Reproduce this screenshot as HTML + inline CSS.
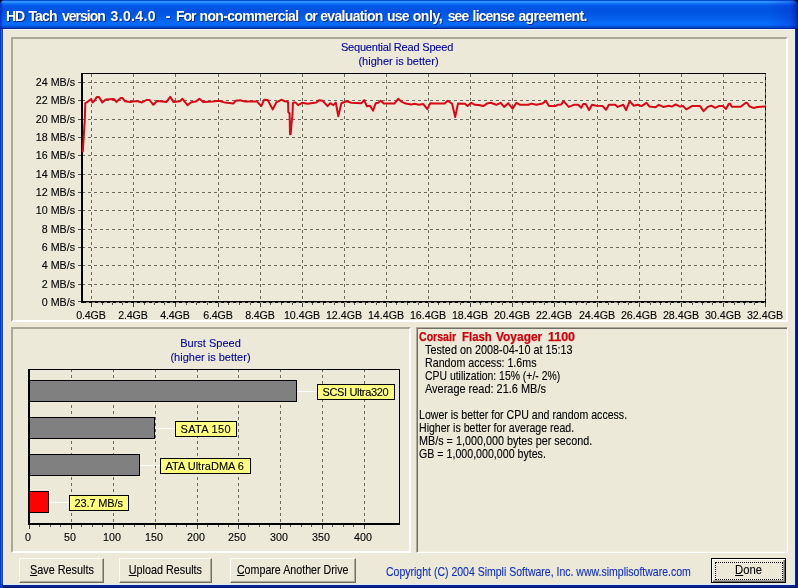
<!DOCTYPE html>
<html>
<head>
<meta charset="utf-8">
<title>HD Tach</title>
<style>
html,body{margin:0;padding:0;}
body{width:798px;height:588px;overflow:hidden;background:#ece9d8;position:relative;font-family:"Liberation Sans",sans-serif;font-size:11px;color:#000;}
.abs{position:absolute;}
#titlebar{left:0;top:0;width:798px;height:29px;background:linear-gradient(to bottom,#0050d2 0px,#0050d2 1px,#2c8cff 1px,#3296ff 2px,#1f82fc 3px,#0a68f0 4px,#0058e8 6px,#0054e1 9px,#0054e1 12px,#025ae6 15px,#0460ec 19px,#066af6 22px,#066cfa 25px,#0460ec 26px,#0248c8 27px,#0248c8 28px,#08289a 28px,#08289a 29px);}
#titletext{left:0;top:8px;width:798px;height:16px;color:#fff;font-weight:bold;font-size:14px;line-height:16px;will-change:transform;white-space:pre;text-shadow:1px 1px 0 #0a2a8a;}
#titletext span{position:absolute;top:0;white-space:pre;}
#bl{left:0;top:29px;width:4px;height:559px;background:linear-gradient(to right,#0032d2 0px,#0032d2 1px,#2d64e6 1px,#2d64e6 2px,#19469f 2px,#19469f 3px,#dcf0ff 3px,#dcf0ff 4px);}
#br{left:794px;top:29px;width:4px;height:559px;background:linear-gradient(to right,#e1f0ff 0px,#e1f0ff 1px,#052a8e 1px,#052a8e 2px,#001e84 2px,#001e84 3px,#001a82 3px,#001a82 4px);}
#bb{left:0;top:584px;width:798px;height:4px;background:linear-gradient(to bottom,#dcebff 0px,#dcebff 1px,#0a2896 1px,#0a2896 2px,#001e88 2px,#001e88 3px,#001a82 3px,#001a82 4px);}
#tw{left:3px;top:29px;width:792px;height:1px;background:#eef5ff;}
#cl{left:0;top:584px;width:3px;height:4px;background:linear-gradient(to right,#0032d2 0px,#0032d2 1px,#1a46c0 1px,#1a46c0 2px,#102e96 2px);}
#cr{left:795px;top:584px;width:3px;height:4px;background:#001a82;}
.groove{box-sizing:border-box;border:2px solid;border-color:#aca899 #fff #fff #aca899;}
.sunken{box-sizing:border-box;border:1px solid;border-color:#aca899 #fff #fff #aca899;box-shadow:inset 1px 1px 0 #716f64, inset -1px -1px 0 #f1efe2;}
.btn{display:flex;justify-content:center;box-sizing:border-box;height:25px;border:1px solid;border-color:#fdfcf6 #716f64 #716f64 #fdfcf6;box-shadow:inset -1px -1px 0 #aca899;text-align:center;line-height:23px;font-size:11px;}
.lbl{box-sizing:border-box;background:#ffff80;border:1px solid #000;height:16px;}
.lblt{-webkit-text-stroke:0.12px currentColor;height:14px;line-height:14px;font-size:11px;white-space:pre;}
.t{white-space:pre;line-height:13px;-webkit-text-stroke:0.12px currentColor;}
u{text-decoration:underline;}
.yl{left:19px;width:56px;text-align:right;font-size:10.7px;}
.xl{top:309px;width:60px;text-align:center;font-size:10.7px;letter-spacing:-0.2px;}
.bl{top:531px;width:60px;text-align:center;font-size:10.7px;}
.sx{font-size:12.2px;transform-origin:0 0;}
.bt{-webkit-text-stroke:0.12px currentColor;display:block;flex:none;white-space:nowrap;font-size:12.2px;letter-spacing:0;}
</style>
</head>
<body><div id="wrap" style="position:absolute;left:0;top:0;width:798px;height:588px;opacity:0.999;">
<div id="titlebar" class="abs"></div>
<div class="abs" style="left:768px;top:0;width:30px;height:29px;background:linear-gradient(to right,rgba(10,30,200,0) 0px,rgba(10,30,200,0.28) 22px,rgba(8,30,170,0.6) 27px,rgba(6,24,140,0.85) 30px);"></div>
<div class="abs" style="left:0;top:0;width:3px;height:29px;background:linear-gradient(to right,rgba(6,30,180,0.7) 0px,rgba(6,30,180,0.45) 1.5px,rgba(6,30,180,0) 3px);"></div>
<svg class="abs" style="left:0;top:0;" width="798" height="5" viewBox="0 0 798 5"><path d="M0 0H3Q0.8 0.8 0 3.2Z" fill="#06081a"/><path d="M798 0H794Q797 0.8 798 4Z" fill="#06081a"/></svg>
<div id="titletext" class="abs"><span style="left:6.0px;letter-spacing:-1.00px">HD</span><span style="left:28.5px;letter-spacing:-0.90px">Tach</span><span style="left:62.0px;letter-spacing:-1.00px">version</span><span style="left:110.5px;letter-spacing:0.35px">3.0.4.0</span><span style="left:165.7px;letter-spacing:-0.55px">-</span><span style="left:175.9px;letter-spacing:-1.00px">For</span><span style="left:199.6px;letter-spacing:-0.67px">non-commercial</span><span style="left:304.7px;letter-spacing:-1.05px">or</span><span style="left:320.2px;letter-spacing:-0.67px">evaluation</span><span style="left:387.1px;letter-spacing:-0.90px">use</span><span style="left:412.7px;letter-spacing:-0.40px">only,</span><span style="left:447.7px;letter-spacing:-0.85px">see</span><span style="left:472.6px;letter-spacing:-0.85px">license</span><span style="left:518.4px;letter-spacing:-0.63px">agreement.</span></div>
<div id="bl" class="abs"></div>
<div id="br" class="abs"></div>
<div id="bb" class="abs"></div>
<div id="tw" class="abs"></div>
<div id="cl" class="abs"></div>
<div id="cr" class="abs"></div>

<!-- frames -->
<div class="abs groove" style="left:11px;top:37px;width:777px;height:285px;"></div>
<div class="abs groove" style="left:11px;top:327px;width:400px;height:226px;"></div>
<div class="abs sunken" style="left:416px;top:327px;width:372px;height:226px;"></div>

<svg class="abs" style="left:0;top:0;" width="798" height="588" viewBox="0 0 798 588">
<g stroke="#6c6a5c" stroke-width="1" stroke-dasharray="3 3" shape-rendering="crispEdges" fill="none">
<line x1="82" y1="82.5" x2="766" y2="82.5"/>
<line x1="82" y1="100.5" x2="766" y2="100.5"/>
<line x1="82" y1="119.5" x2="766" y2="119.5"/>
<line x1="82" y1="137.5" x2="766" y2="137.5"/>
<line x1="82" y1="155.5" x2="766" y2="155.5"/>
<line x1="82" y1="174.5" x2="766" y2="174.5"/>
<line x1="82" y1="192.5" x2="766" y2="192.5"/>
<line x1="82" y1="210.5" x2="766" y2="210.5"/>
<line x1="82" y1="229.5" x2="766" y2="229.5"/>
<line x1="82" y1="247.5" x2="766" y2="247.5"/>
<line x1="82" y1="265.5" x2="766" y2="265.5"/>
<line x1="82" y1="284.5" x2="766" y2="284.5"/>
<line x1="91.5" y1="74" x2="91.5" y2="301"/>
<line x1="133.5" y1="74" x2="133.5" y2="301"/>
<line x1="175.5" y1="74" x2="175.5" y2="301"/>
<line x1="218.5" y1="74" x2="218.5" y2="301"/>
<line x1="260.5" y1="74" x2="260.5" y2="301"/>
<line x1="302.5" y1="74" x2="302.5" y2="301"/>
<line x1="344.5" y1="74" x2="344.5" y2="301"/>
<line x1="386.5" y1="74" x2="386.5" y2="301"/>
<line x1="428.5" y1="74" x2="428.5" y2="301"/>
<line x1="470.5" y1="74" x2="470.5" y2="301"/>
<line x1="512.5" y1="74" x2="512.5" y2="301"/>
<line x1="554.5" y1="74" x2="554.5" y2="301"/>
<line x1="597.5" y1="74" x2="597.5" y2="301"/>
<line x1="639.5" y1="74" x2="639.5" y2="301"/>
<line x1="681.5" y1="74" x2="681.5" y2="301"/>
<line x1="723.5" y1="74" x2="723.5" y2="301"/>
</g>
<g shape-rendering="crispEdges">
<rect x="81" y="73" width="685" height="1" fill="#000"/>
<rect x="765" y="73" width="1" height="230" fill="#000"/>
<line x1="765.5" y1="74" x2="765.5" y2="300" stroke="#6c6a5c" stroke-dasharray="3 3"/>
<rect x="81" y="73" width="2" height="230" fill="#000"/>
<rect x="81" y="301" width="685" height="2" fill="#000"/>
<line x1="86" y1="302.5" x2="765" y2="302.5" stroke="#8a8778" stroke-dasharray="3 3"/>
<rect x="78" y="82" width="3" height="1" fill="#555"/>
<rect x="78" y="100" width="3" height="1" fill="#555"/>
<rect x="78" y="119" width="3" height="1" fill="#555"/>
<rect x="78" y="137" width="3" height="1" fill="#555"/>
<rect x="78" y="155" width="3" height="1" fill="#555"/>
<rect x="78" y="174" width="3" height="1" fill="#555"/>
<rect x="78" y="192" width="3" height="1" fill="#555"/>
<rect x="78" y="210" width="3" height="1" fill="#555"/>
<rect x="78" y="229" width="3" height="1" fill="#555"/>
<rect x="78" y="247" width="3" height="1" fill="#555"/>
<rect x="78" y="265" width="3" height="1" fill="#555"/>
<rect x="78" y="284" width="3" height="1" fill="#555"/>
<rect x="78" y="301" width="3" height="1" fill="#555"/>
<rect x="91" y="303" width="1" height="4" fill="#444"/>
<rect x="102" y="303" width="1" height="2" fill="#555"/>
<rect x="112" y="303" width="1" height="2" fill="#555"/>
<rect x="122" y="303" width="1" height="2" fill="#555"/>
<rect x="133" y="303" width="1" height="4" fill="#444"/>
<rect x="144" y="303" width="1" height="2" fill="#555"/>
<rect x="154" y="303" width="1" height="2" fill="#555"/>
<rect x="164" y="303" width="1" height="2" fill="#555"/>
<rect x="175" y="303" width="1" height="4" fill="#444"/>
<rect x="186" y="303" width="1" height="2" fill="#555"/>
<rect x="196" y="303" width="1" height="2" fill="#555"/>
<rect x="207" y="303" width="1" height="2" fill="#555"/>
<rect x="218" y="303" width="1" height="4" fill="#444"/>
<rect x="228" y="303" width="1" height="2" fill="#555"/>
<rect x="239" y="303" width="1" height="2" fill="#555"/>
<rect x="250" y="303" width="1" height="2" fill="#555"/>
<rect x="260" y="303" width="1" height="4" fill="#444"/>
<rect x="270" y="303" width="1" height="2" fill="#555"/>
<rect x="281" y="303" width="1" height="2" fill="#555"/>
<rect x="292" y="303" width="1" height="2" fill="#555"/>
<rect x="302" y="303" width="1" height="4" fill="#444"/>
<rect x="312" y="303" width="1" height="2" fill="#555"/>
<rect x="323" y="303" width="1" height="2" fill="#555"/>
<rect x="334" y="303" width="1" height="2" fill="#555"/>
<rect x="344" y="303" width="1" height="4" fill="#444"/>
<rect x="354" y="303" width="1" height="2" fill="#555"/>
<rect x="365" y="303" width="1" height="2" fill="#555"/>
<rect x="376" y="303" width="1" height="2" fill="#555"/>
<rect x="386" y="303" width="1" height="4" fill="#444"/>
<rect x="396" y="303" width="1" height="2" fill="#555"/>
<rect x="407" y="303" width="1" height="2" fill="#555"/>
<rect x="418" y="303" width="1" height="2" fill="#555"/>
<rect x="428" y="303" width="1" height="4" fill="#444"/>
<rect x="438" y="303" width="1" height="2" fill="#555"/>
<rect x="449" y="303" width="1" height="2" fill="#555"/>
<rect x="460" y="303" width="1" height="2" fill="#555"/>
<rect x="470" y="303" width="1" height="4" fill="#444"/>
<rect x="480" y="303" width="1" height="2" fill="#555"/>
<rect x="491" y="303" width="1" height="2" fill="#555"/>
<rect x="502" y="303" width="1" height="2" fill="#555"/>
<rect x="512" y="303" width="1" height="4" fill="#444"/>
<rect x="522" y="303" width="1" height="2" fill="#555"/>
<rect x="533" y="303" width="1" height="2" fill="#555"/>
<rect x="544" y="303" width="1" height="2" fill="#555"/>
<rect x="554" y="303" width="1" height="4" fill="#444"/>
<rect x="565" y="303" width="1" height="2" fill="#555"/>
<rect x="576" y="303" width="1" height="2" fill="#555"/>
<rect x="586" y="303" width="1" height="2" fill="#555"/>
<rect x="597" y="303" width="1" height="4" fill="#444"/>
<rect x="608" y="303" width="1" height="2" fill="#555"/>
<rect x="618" y="303" width="1" height="2" fill="#555"/>
<rect x="628" y="303" width="1" height="2" fill="#555"/>
<rect x="639" y="303" width="1" height="4" fill="#444"/>
<rect x="650" y="303" width="1" height="2" fill="#555"/>
<rect x="660" y="303" width="1" height="2" fill="#555"/>
<rect x="670" y="303" width="1" height="2" fill="#555"/>
<rect x="681" y="303" width="1" height="4" fill="#444"/>
<rect x="692" y="303" width="1" height="2" fill="#555"/>
<rect x="702" y="303" width="1" height="2" fill="#555"/>
<rect x="712" y="303" width="1" height="2" fill="#555"/>
<rect x="723" y="303" width="1" height="4" fill="#444"/>
<rect x="734" y="303" width="1" height="2" fill="#555"/>
<rect x="744" y="303" width="1" height="2" fill="#555"/>
<rect x="754" y="303" width="1" height="2" fill="#555"/>
<rect x="765" y="303" width="1" height="4" fill="#444"/>
</g>
<polyline points="82.8,151.4 83.8,135.1 84.8,119.4 85.3,103.2 87.5,101.9 91.3,99.0 92.5,102.5 94.4,100.7 96.9,96.9 99.0,96.9 102.3,102.5 105.7,99.4 113.8,99.0 116.3,101.9 120.7,98.1 122.6,98.1 125.1,101.3 130.1,101.9 135.1,101.3 137.6,101.3 142.0,102.5 146.4,100.0 149.5,100.0 153.3,104.8 157.1,101.0 160.2,101.3 166.5,101.9 170.2,96.9 173.4,101.9 180.0,101.3 182.5,98.8 187.5,105.1 191.3,102.3 195.7,101.6 199.4,98.8 203.2,101.9 212.6,101.6 218.9,100.7 225.1,102.6 233.3,103.6 235.8,100.7 240.2,100.3 245.2,101.6 257.1,101.6 261.2,106.1 264.2,99.8 267.7,100.1 272.8,109.4 276.3,102.3 281.3,99.8 285.7,101.6 287.4,101.6 288.1,102.6 288.3,112.0 289.6,113.5 290.0,134.3 290.7,134.0 291.5,124.0 292.5,114.5 292.9,103.2 293.8,102.6 295.7,102.6 298.2,105.1 302.0,102.8 307.6,103.8 316.4,102.6 318.9,100.3 322.6,100.7 327.6,106.1 330.2,103.2 333.3,105.1 335.8,102.6 338.3,116.3 341.4,103.2 346.4,101.3 351.5,102.8 361.5,103.2 364.2,100.1 366.9,106.3 370.0,105.7 373.1,110.7 375.7,103.2 378.2,102.8 380.7,100.7 383.8,103.6 394.4,103.6 398.2,98.8 401.3,101.6 405.7,103.6 411.4,104.4 414.5,103.8 418.9,104.8 423.3,104.1 427.3,109.1 430.2,103.2 433.3,103.6 444.6,103.6 447.7,100.7 452.1,103.8 455.2,117.0 458.0,103.6 465.0,103.8 467.5,106.1 471.3,102.8 475.0,104.8 478.8,105.1 483.2,106.1 486.9,103.6 490.7,102.8 496.3,104.8 500.7,102.8 504.1,106.9 508.2,103.2 512.6,108.6 516.4,102.8 520.2,104.8 528.3,104.8 531.4,103.6 536.4,104.8 542.7,103.6 545.8,100.7 549.0,106.1 555.2,106.1 557.5,104.8 561.3,104.4 563.5,101.1 568.8,106.9 573.8,104.8 578.2,104.8 581.3,107.8 583.2,104.1 585.7,104.1 589.1,110.1 592.0,104.8 596.4,105.7 602.6,106.1 606.1,109.8 608.9,104.8 615.2,104.8 617.7,106.9 623.3,104.8 626.1,110.1 629.6,101.3 633.9,105.7 637.7,104.8 641.5,106.1 646.5,102.8 649.6,106.6 655.6,107.3 658.8,104.8 663.2,106.9 668.8,105.7 671.9,106.6 675.7,104.4 680.1,106.6 683.2,106.1 686.3,109.4 692.0,106.1 700.1,106.1 703.6,111.1 707.6,106.9 711.4,105.7 715.2,107.8 718.9,106.1 722.7,106.1 726.1,108.9 728.8,103.7 730.1,103.7 731.8,106.8 740.6,106.8 745.9,102.8 747.2,103.0 749.4,106.3 753.3,107.9 757.7,107.0 765.2,106.5" fill="none" stroke="#da0716" stroke-width="2" stroke-linejoin="round" stroke-linecap="round"/>
</svg>
<div class="abs t yl" style="top:76px;">24 MB/s</div>
<div class="abs t yl" style="top:94px;">22 MB/s</div>
<div class="abs t yl" style="top:113px;">20 MB/s</div>
<div class="abs t yl" style="top:131px;">18 MB/s</div>
<div class="abs t yl" style="top:149px;">16 MB/s</div>
<div class="abs t yl" style="top:168px;">14 MB/s</div>
<div class="abs t yl" style="top:186px;">12 MB/s</div>
<div class="abs t yl" style="top:204px;">10 MB/s</div>
<div class="abs t yl" style="top:223px;">8 MB/s</div>
<div class="abs t yl" style="top:241px;">6 MB/s</div>
<div class="abs t yl" style="top:259px;">4 MB/s</div>
<div class="abs t yl" style="top:278px;">2 MB/s</div>
<div class="abs t yl" style="top:296px;">0 MB/s</div>
<div class="abs t xl" style="left:61px;">0.4GB</div>
<div class="abs t xl" style="left:103px;">2.4GB</div>
<div class="abs t xl" style="left:145px;">4.4GB</div>
<div class="abs t xl" style="left:188px;">6.4GB</div>
<div class="abs t xl" style="left:230px;">8.4GB</div>
<div class="abs t xl" style="left:272px;letter-spacing:0;">10.4GB</div>
<div class="abs t xl" style="left:314px;letter-spacing:0;">12.4GB</div>
<div class="abs t xl" style="left:356px;letter-spacing:0;">14.4GB</div>
<div class="abs t xl" style="left:398px;letter-spacing:0;">16.4GB</div>
<div class="abs t xl" style="left:440px;letter-spacing:0;">18.4GB</div>
<div class="abs t xl" style="left:482px;letter-spacing:0;">20.4GB</div>
<div class="abs t xl" style="left:524px;letter-spacing:0;">22.4GB</div>
<div class="abs t xl" style="left:567px;letter-spacing:0;">24.4GB</div>
<div class="abs t xl" style="left:609px;letter-spacing:0;">26.4GB</div>
<div class="abs t xl" style="left:651px;letter-spacing:0;">28.4GB</div>
<div class="abs t xl" style="left:693px;letter-spacing:0;">30.4GB</div>
<div class="abs t xl" style="left:735px;letter-spacing:0;">32.4GB</div>

<svg class="abs" style="left:0;top:0;" width="798" height="588" viewBox="0 0 798 588">
<g stroke="#6c6a5c" stroke-width="1" stroke-dasharray="3 3" shape-rendering="crispEdges" fill="none">
<line x1="71.5" y1="369" x2="71.5" y2="523"/>
<line x1="113.5" y1="369" x2="113.5" y2="523"/>
<line x1="155.5" y1="369" x2="155.5" y2="523"/>
<line x1="197.5" y1="369" x2="197.5" y2="523"/>
<line x1="238.5" y1="369" x2="238.5" y2="523"/>
<line x1="280.5" y1="369" x2="280.5" y2="523"/>
<line x1="322.5" y1="369" x2="322.5" y2="523"/>
<line x1="364.5" y1="369" x2="364.5" y2="523"/>
</g>
<g shape-rendering="crispEdges">
<rect x="28" y="369" width="372" height="1" fill="#000"/>
<rect x="399" y="369" width="1" height="156" fill="#000"/>
<rect x="28" y="369" width="2" height="156" fill="#000"/>
<rect x="28" y="523" width="372" height="2" fill="#000"/>
<rect x="29" y="525" width="1" height="4" fill="#444"/>
<rect x="39" y="525" width="1" height="2" fill="#555"/>
<rect x="50" y="525" width="1" height="2" fill="#555"/>
<rect x="60" y="525" width="1" height="2" fill="#555"/>
<rect x="71" y="525" width="1" height="4" fill="#444"/>
<rect x="81" y="525" width="1" height="2" fill="#555"/>
<rect x="92" y="525" width="1" height="2" fill="#555"/>
<rect x="102" y="525" width="1" height="2" fill="#555"/>
<rect x="113" y="525" width="1" height="4" fill="#444"/>
<rect x="123" y="525" width="1" height="2" fill="#555"/>
<rect x="134" y="525" width="1" height="2" fill="#555"/>
<rect x="144" y="525" width="1" height="2" fill="#555"/>
<rect x="155" y="525" width="1" height="4" fill="#444"/>
<rect x="165" y="525" width="1" height="2" fill="#555"/>
<rect x="176" y="525" width="1" height="2" fill="#555"/>
<rect x="186" y="525" width="1" height="2" fill="#555"/>
<rect x="197" y="525" width="1" height="4" fill="#444"/>
<rect x="207" y="525" width="1" height="2" fill="#555"/>
<rect x="218" y="525" width="1" height="2" fill="#555"/>
<rect x="228" y="525" width="1" height="2" fill="#555"/>
<rect x="238" y="525" width="1" height="4" fill="#444"/>
<rect x="248" y="525" width="1" height="2" fill="#555"/>
<rect x="259" y="525" width="1" height="2" fill="#555"/>
<rect x="269" y="525" width="1" height="2" fill="#555"/>
<rect x="280" y="525" width="1" height="4" fill="#444"/>
<rect x="290" y="525" width="1" height="2" fill="#555"/>
<rect x="301" y="525" width="1" height="2" fill="#555"/>
<rect x="311" y="525" width="1" height="2" fill="#555"/>
<rect x="322" y="525" width="1" height="4" fill="#444"/>
<rect x="332" y="525" width="1" height="2" fill="#555"/>
<rect x="343" y="525" width="1" height="2" fill="#555"/>
<rect x="353" y="525" width="1" height="2" fill="#555"/>
<rect x="364" y="525" width="1" height="4" fill="#444"/>
<rect x="29.5" y="380.5" width="267" height="21" fill="#808080" stroke="#000" stroke-width="1"/>
<rect x="297" y="391" width="20" height="1" fill="#fff"/>
<rect x="29.5" y="417.5" width="125" height="21" fill="#808080" stroke="#000" stroke-width="1"/>
<rect x="155" y="428" width="20" height="1" fill="#fff"/>
<rect x="29.5" y="454.5" width="110" height="21" fill="#808080" stroke="#000" stroke-width="1"/>
<rect x="140" y="465" width="20" height="1" fill="#fff"/>
<rect x="29.5" y="491.5" width="19" height="21" fill="#ff0000" stroke="#000" stroke-width="1"/>
<rect x="49" y="502" width="20" height="1" fill="#fff"/>
</g>
</svg>
<div class="abs lbl" style="left:317px;top:384px;width:78px;"></div><div class="abs lblt" style="left:322.5px;top:385px;letter-spacing:-0.35px;">SCSI Ultra320</div>
<div class="abs lbl" style="left:175px;top:421px;width:62px;"></div><div class="abs lblt" style="left:180.5px;top:422px;letter-spacing:0.3px;">SATA 150</div>
<div class="abs lbl" style="left:160px;top:458px;width:91px;"></div><div class="abs lblt" style="left:165.5px;top:459px;letter-spacing:0px;">ATA UltraDMA 6</div>
<div class="abs lbl" style="left:69px;top:495px;width:60px;"></div><div class="abs lblt" style="left:74.5px;top:496px;letter-spacing:-0.13px;">23.7 MB/s</div>
<div class="abs t bl" style="left:-2px;">0</div>
<div class="abs t bl" style="left:40px;">50</div>
<div class="abs t bl" style="left:82px;">100</div>
<div class="abs t bl" style="left:124px;">150</div>
<div class="abs t bl" style="left:166px;">200</div>
<div class="abs t bl" style="left:207px;">250</div>
<div class="abs t bl" style="left:249px;">300</div>
<div class="abs t bl" style="left:291px;">350</div>
<div class="abs t bl" style="left:333px;">400</div>

<div class="abs t" style="left:419.1px;top:331px;color:#d0000c;-webkit-text-stroke:0.25px #d0000c;font-weight:bold;font-size:12px;transform-origin:0 0;transform:scaleX(0.8803);">Corsair</div>
<div class="abs t" style="left:461.7px;top:331px;color:#d0000c;-webkit-text-stroke:0.25px #d0000c;font-weight:bold;font-size:12px;transform-origin:0 0;transform:scaleX(0.9507);">Flash</div>
<div class="abs t" style="left:496.4px;top:331px;color:#d0000c;-webkit-text-stroke:0.25px #d0000c;font-weight:bold;font-size:12px;transform-origin:0 0;transform:scaleX(0.9942);">Voyager</div>
<div class="abs t" style="left:547.5px;top:331px;color:#d0000c;-webkit-text-stroke:0.25px #d0000c;font-weight:bold;font-size:12px;transform-origin:0 0;transform:scaleX(1.0366);">1100</div>
<div class="abs t sx" style="left:425px;top:344px;transform:scaleX(0.8891);">Tested on 2008-04-10 at 15:13</div>
<div class="abs t sx" style="left:425px;top:357px;transform:scaleX(0.8755);">Random access: 1.6ms</div>
<div class="abs t sx" style="left:425px;top:370px;transform:scaleX(0.8548);">CPU utilization: 15% (+/- 2%)</div>
<div class="abs t sx" style="left:425px;top:383px;transform:scaleX(0.8983);">Average read: 21.6 MB/s</div>
<div class="abs t sx" style="left:419px;top:408.7px;transform:scaleX(0.8678);">Lower is better for CPU and random access.</div>
<div class="abs t sx" style="left:419px;top:421.7px;transform:scaleX(0.8672);">Higher is better for average read.</div>
<div class="abs t sx" style="left:419px;top:434.7px;transform:scaleX(0.8861);">MB/s = 1,000,000 bytes per second.</div>
<div class="abs t sx" style="left:419px;top:447.7px;transform:scaleX(0.8731);">GB = 1,000,000,000 bytes.</div>

<!-- titles -->
<div class="abs t" style="left:297px;top:41px;width:200px;text-align:center;color:#0000a0;letter-spacing:-0.19px;">Sequential Read Speed</div>
<div class="abs t" style="left:298.5px;top:55px;width:200px;text-align:center;color:#0000a0;">(higher is better)</div>
<div class="abs t" style="left:110.5px;top:337px;width:200px;text-align:center;color:#0000a0;">Burst Speed</div>
<div class="abs t" style="left:110.5px;top:351px;width:200px;text-align:center;color:#0000a0;">(higher is better)</div>

<!-- buttons -->
<div class="abs btn" style="left:19px;top:558px;width:85px;"><span class="bt" style="transform:scaleX(0.8912)"><u>S</u>ave Results</span></div>
<div class="abs btn" style="left:119px;top:558px;width:93px;"><span class="bt" style="transform:scaleX(0.8856)"><u>U</u>pload Results</span></div>
<div class="abs btn" style="left:230px;top:558px;width:126px;"><span class="bt" style="transform:scaleX(0.8763)"><u>C</u>ompare Another Drive</span></div>
<div class="abs t sx" style="left:386px;top:565.5px;color:#1030c0;transform:scaleX(0.8621);">Copyright (C) 2004 Simpli Software, Inc. www.simplisoftware.com</div>
<div class="abs btn" style="left:711px;top:558px;width:75px;border-color:#000;box-shadow:inset 1px 1px 0 #fff, inset -1px -1px 0 #716f64, inset -2px -2px 0 #aca899;"><span class="bt" style="transform:scaleX(0.9265)"><u>D</u>one</span><div style="position:absolute;left:3px;top:3px;right:2px;bottom:2px;border:1px dotted #000;"></div></div>

</div></body>
</html>
